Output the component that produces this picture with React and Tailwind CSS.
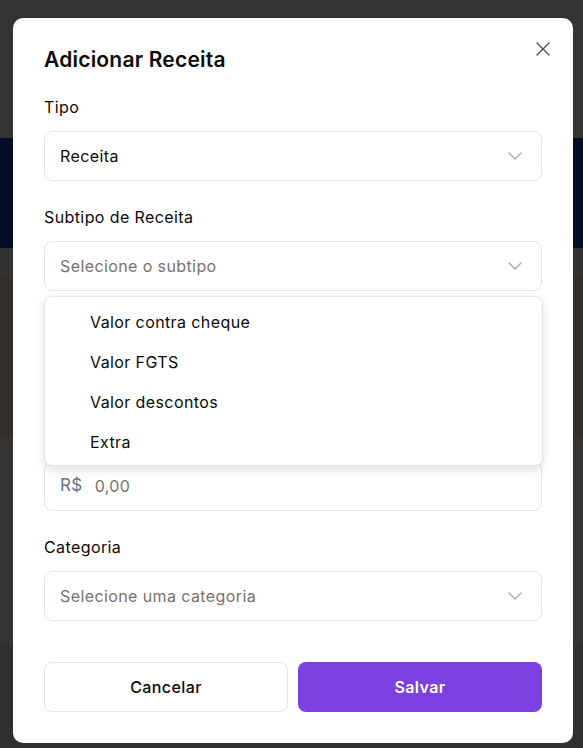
import React from "react";

const Chevron = ({ className }) => (
    <svg width="14" height="8" viewBox="0 0 14 8" fill="none" className={className}>
        <path d="M1 1l6 6 6-6" stroke="currentColor" strokeWidth="1.2" strokeLinecap="round" strokeLinejoin="round" />
    </svg>
);

const SelectBox = ({ value, placeholder }) => (
    <div className="flex h-[50px] items-center justify-between rounded-lg border border-[#e7e5e4] bg-white pl-[15px] pr-[19px]">
        {value ? (
            <span className="text-[16px] text-[#0c0a09]">{value}</span>
        ) : (
            <span className="text-[16px] text-[#78716c]">{placeholder}</span>
        )}
        <Chevron className="text-[#a8a29e]" />
    </div>
);

const Field = ({ label, children }) => (
    <div className="flex flex-col gap-3">
        <label className="text-[16px] leading-6 text-[#0c0a09]">{label}</label>
        {children}
    </div>
);

const subtipos = ["Valor contra cheque", "Valor FGTS", "Valor descontos", "Extra"];

export default function App() {
    return (
        <div
            className="relative h-[748px] w-[583px] overflow-hidden bg-[#333333] tracking-[0.025em]"
            style={{ fontFamily: "Inter, 'Noto Sans', sans-serif" }}
        >
            {/* dimmed page behind the dialog */}
            <div className="flex h-full flex-col">
                <div className="h-[138px] bg-[#333333]" />
                <div className="h-[110px] bg-[#030d26]" />
                <div className="h-[29px] bg-[#323232]" />
                <div className="h-[160px] bg-[#332e2a]" />
                <div className="h-[208px] bg-[#333333]" />
                <div className="flex-1 bg-[#2f2f2f]" />
            </div>

            {/* Dialog */}
            <div className="absolute left-[13px] top-[18px] w-[560px] rounded-[10px] bg-white px-[31px] pb-[31px] pt-[28px]">
                <button className="absolute right-[23px] top-[24px] text-[#4b4b4b]">
                    <svg width="14" height="14" viewBox="0 0 14 14" fill="none">
                        <path d="M1 1l12 12M13 1L1 13" stroke="currentColor" strokeWidth="1.3" strokeLinecap="round" />
                    </svg>
                </button>

                <h2 className="text-[21px] font-semibold leading-7 tracking-[0.01em] text-[#0c0a09]">Adicionar Receita</h2>

                <div className="relative mt-[21px] flex flex-col gap-6">
                    <Field label="Tipo">
                        <SelectBox value="Receita" />
                    </Field>
                    <Field label="Subtipo de Receita">
                        <SelectBox placeholder="Selecione o subtipo" />
                    </Field>
                    <Field label="Descrição">
                        <div className="flex h-[50px] items-center rounded-lg border border-[#e7e5e4] px-[15px] text-[16px] text-[#78716c]">
                            Ex: Salário
                        </div>
                    </Field>
                    <Field label="Valor">
                        <div className="flex h-[50px] items-center gap-3 rounded-lg border border-[#e7e5e4] px-[15px] text-[16px]">
                            <span className="text-[17px] text-[#64748b]">R$</span>
                            <span className="text-[#78716c]">0,00</span>
                        </div>
                    </Field>
                    <Field label="Categoria">
                        <SelectBox placeholder="Selecione uma categoria" />
                    </Field>

                    {/* open subtype menu */}
                    <div className="absolute left-0 right-[-1px] top-[201px] rounded-lg border border-[#e7e5e4] bg-white pb-[3px] pt-[5px] shadow-[0_4px_10px_rgba(0,0,0,0.12)]">
                        {subtipos.map((item) => (
                            <div key={item} className="flex h-10 items-center pl-[45px] text-[16px] text-[#0c0a09]">
                                {item}
                            </div>
                        ))}
                    </div>
                </div>

                <div className="mt-[41px] grid grid-cols-2 gap-[10px]">
                    <button className="h-[50px] rounded-lg border border-[#e7e5e4] bg-white text-[16px] font-medium text-[#0c0a09]">
                        Cancelar
                    </button>
                    <button className="h-[50px] rounded-lg bg-[#7c3fe0] text-[16px] font-semibold text-white">
                        Salvar
                    </button>
                </div>
            </div>
        </div>
    );
}
